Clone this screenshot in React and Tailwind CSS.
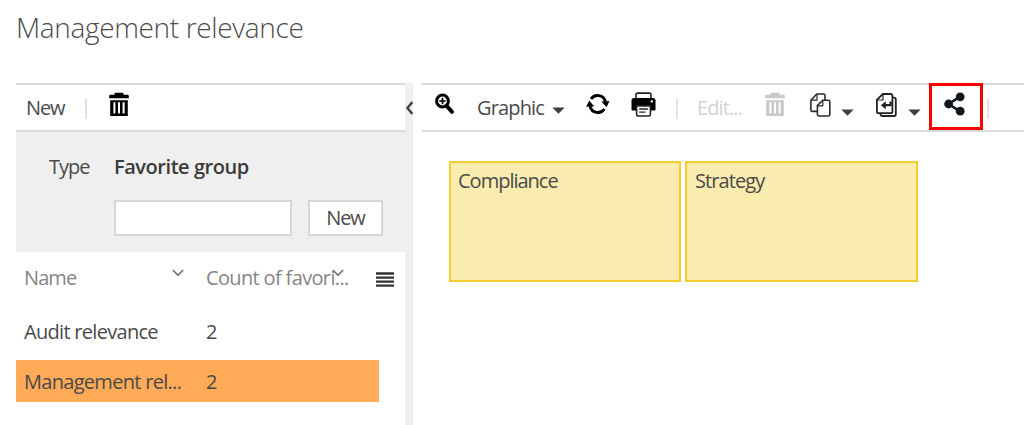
import React from "react";

function Trash({ className }) {
  return (
    <svg viewBox="0 0 20 25" className={className} fill="currentColor">
      <path d="M5.5 1.6Q5.5 0.8 6.5 0.8H13.5Q14.5 0.8 14.5 1.6V2.8H18.6Q19.8 2.8 19.8 4V6.2H0.2V4Q0.2 2.8 1.4 2.8H5.5Z" />
      <path fillRule="evenodd" d="M1.2 8.2H18.8V24H1.2ZM4.4 10.2V21.4H6.4V10.2ZM9 10.2V21.4H11V10.2ZM13.6 10.2V21.4H15.6V10.2Z" />
    </svg>
  );
}

function Caret({ className }) {
  return (
    <svg viewBox="0 0 13 7" className={className} fill="#3f3f3f">
      <path d="M0.3 0.5H12.7L6.5 6.8Z" />
    </svg>
  );
}

function ZoomIn({ className }) {
  return (
    <svg viewBox="0 0 20 22" className={className} fill="none" stroke="#000">
      <circle cx="7.5" cy="8" r="5.9" strokeWidth="3" />
      <path d="M7.5 4.8V11.2M4.3 8H10.7" strokeWidth="1.7" />
      <path d="M11.8 13L17 18.8" strokeWidth="4" strokeLinecap="round" />
    </svg>
  );
}

function Refresh({ className }) {
  return (
    <svg viewBox="0 0 24 22" className={className} fill="none" stroke="#000" strokeWidth="2.9">
      <path d="M5 6A8 8 0 0 1 19.4 8.6" />
      <path d="M18.4 16A8 8 0 0 1 4 13.4" />
      <path d="M15.4 8.4L23.4 8L20.6 14.2Z" fill="#000" stroke="none" />
      <path d="M0.2 13.8L8.2 13.4L3.2 7.6Z" fill="#000" stroke="none" />
    </svg>
  );
}

function Printer({ className }) {
  return (
    <svg viewBox="0 0 25 25" className={className}>
      <path d="M5 7V2.6Q5 1.1 6.5 1.1H18.5Q20 1.1 20 2.6V7" fill="none" stroke="#222" strokeWidth="1.6" />
      <path d="M3 6H22Q24.5 6 24.5 8.5V17.5Q24.5 18.6 23.4 18.6H1.6Q0.5 18.6 0.5 17.5V8.5Q0.5 6 3 6Z" fill="#000" />
      <circle cx="20.8" cy="9.4" r="1.2" fill="#fff" />
      <path d="M5.6 13.9H19.4V22.5Q19.4 24 17.9 24H7.1Q5.6 24 5.6 22.5Z" fill="#fff" stroke="#222" strokeWidth="1.6" />
      <path d="M8.2 17H16.8M8.2 20.2H14.5" stroke="#222" strokeWidth="1.3" />
    </svg>
  );
}

function Copy({ className }) {
  return (
    <svg viewBox="0 0 21 24" className={className} fill="#fff" stroke="#2b2b2b" strokeWidth="1.6" strokeLinejoin="round">
      <path d="M6.8 1H13.4Q15 1 15 2.6V18.4H2.4Q0.9 18.4 0.9 16.9V7.2Z" />
      <path d="M7 1.2V7.2H1.2" fill="none" strokeWidth="1.2" />
      <path d="M12.8 7.2H18.2Q19.8 7.2 19.8 8.8V21.4Q19.8 23 18.2 23H9Q7.4 23 7.4 21.4V12.6Z" />
      <path d="M12.8 7.4V12.8H7.6" fill="none" strokeWidth="1.2" />
    </svg>
  );
}

function PasteBack({ className }) {
  return (
    <svg viewBox="0 0 21 24" className={className} fill="#fff" stroke="#222" strokeWidth="1.8" strokeLinejoin="round">
      <path d="M17 4.6H18Q19.8 4.6 19.8 6.4V21.2Q19.8 23 18 23H6.4Q4.6 23 4.4 20.6" />
      <path d="M6.8 1H14.6Q16.4 1 16.4 2.8V18.4Q16.4 20.2 14.6 20.2H2.7Q0.9 20.2 0.9 18.4V6.8Z" />
      <path d="M7 1.2V7H1.2" fill="none" strokeWidth="1.2" />
      <path d="M14.6 8.4V12.2H8" fill="none" strokeWidth="2.2" />
      <path d="M4.8 12.2L9.8 8.2V16.2Z" fill="#222" stroke="none" />
    </svg>
  );
}

function Share({ className }) {
  return (
    <svg viewBox="0 0 21 24" className={className} fill="#12171c" stroke="#12171c">
      <path d="M16 4.6L4.6 12L16 19.4" fill="none" strokeWidth="2.6" />
      <circle cx="16.2" cy="4.8" r="4.4" stroke="none" />
      <circle cx="4.6" cy="12" r="4.4" stroke="none" />
      <circle cx="16.2" cy="19.2" r="4.4" stroke="none" />
    </svg>
  );
}

function Chevron({ className }) {
  return (
    <svg viewBox="0 0 12 8" className={className} fill="none" stroke="#777" strokeWidth="1.7">
      <path d="M0.8 1L6 6.2L11.2 1" />
    </svg>
  );
}

const bar = "flex h-[49px] items-start border-y-2 border-[#dadada] whitespace-nowrap";
const divider = "mt-[14px] h-5 w-0.5 shrink-0 bg-[#e2e2e4]";

export default function App() {
  return (
    <div className="flex h-[425px] w-[1024px] flex-col overflow-hidden bg-white font-['Open_Sans','Noto_Sans',sans-serif] text-[20px] leading-6 text-[#4a4a4a]">
      <h1 className="h-[83px] shrink-0 pt-[9px] pl-4 text-[28px] leading-9 font-light tracking-[-0.35px] text-[#4c4c4c]">
        Management relevance
      </h1>
      <div className="flex min-h-0 flex-1 pl-4">
        <section className="flex w-[389px] shrink-0 flex-col">
          <div className={bar}>
            <span className="mt-[11px] ml-2.5 w-[59px] tracking-[-1.1px]">New</span>
            <i className={divider} />
            <Trash className="mt-[7px] ml-[22px] h-[25px] w-5 text-black" />
          </div>
          <div className="h-[120px] shrink-0 bg-[#efefef] pt-[23px] pl-[33px]">
            <div className="flex whitespace-nowrap">
              <span className="w-[65px] tracking-[-1px]">Type</span>
              <b className="font-semibold tracking-[-0.45px] text-[#3a3a3a]">Favorite group</b>
            </div>
            <div className="mt-[21px] ml-[65px] flex gap-4">
              <input aria-label="Name" className="h-9 w-[178px] border-2 border-[#d6d6d6] bg-white" />
              <button className="h-9 w-[75px] border-2 border-[#d6d6d6] bg-white tracking-[-1.1px]">New</button>
            </div>
          </div>
          <div className="flex h-[57px] shrink-0 pt-[14px] pl-2 whitespace-nowrap text-[#858585]">
            <span className="w-[148px] tracking-[-0.9px]">Name</span>
            <Chevron className="mt-[3px] h-2 w-3" />
            <span className="ml-[22px] w-[126px] tracking-[-0.65px]">Count of favori...</span>
            <Chevron className="mt-[3px] h-2 w-3" />
            <svg viewBox="0 0 18 16" className="mt-[5px] ml-8 h-4 w-[18px]" stroke="#333" strokeWidth="2.3">
              <path d="M0 2.5H18M0 6.6H18M0 10.7H18M0 14.6H18" />
            </svg>
          </div>
          <div className="flex h-[51px] shrink-0 pt-[11px] pl-2 whitespace-nowrap">
            <span className="w-[182px] tracking-[-0.7px]">Audit relevance</span>
            <span>2</span>
          </div>
          <div className="flex h-[42px] w-[363px] shrink-0 bg-[#ffab57] pt-[10px] pl-2 whitespace-nowrap">
            <span className="w-[182px] tracking-[-0.7px]">Management rel...</span>
            <span>2</span>
          </div>
        </section>

        <div className="flex w-2 shrink-0 justify-center bg-[#efefef]">
          <svg viewBox="0 0 8 14" className="mt-[18px] h-[14px] w-2 shrink-0" fill="none" stroke="#444" strokeWidth="2.4">
            <path d="M7.4 1L2.4 7L7.4 13" />
          </svg>
        </div>

        <main className="ml-[9px] w-[602px] shrink-0">
          <div className={bar}>
            <ZoomIn className="mt-2 ml-[13px] h-[22px] w-5 shrink-0" />
            <span className="mt-[11px] ml-[22px] w-[75px] shrink-0 tracking-[-0.85px]">Graphic</span>
            <Caret className="mt-[22px] h-[7px] w-[13px] shrink-0" />
            <Refresh className="mt-2 ml-[21px] h-[22px] w-6 shrink-0" />
            <Printer className="mt-[7px] ml-[21px] h-[25px] w-[25px] shrink-0" />
            <span className="w-5 shrink-0" />
            <i className={divider} />
            <span className="mt-[11px] ml-[19px] w-[68px] shrink-0 tracking-[-0.9px] text-[#d2d2d2]">Edit...</span>
            <Trash className="mt-[7px] h-[25px] w-5 shrink-0 text-[#c9c9c9]" />
            <Copy className="mt-2 ml-[25px] h-6 w-[21px] shrink-0" />
            <Caret className="mt-6 ml-[10px] h-[7px] w-[13px] shrink-0" />
            <PasteBack className="mt-2 ml-[22px] h-6 w-[21px] shrink-0" />
            <Caret className="mt-6 ml-[11px] h-[7px] w-[13px] shrink-0" />
            <div className="-mt-[2px] ml-2 flex h-[47px] w-[54px] shrink-0 border-[3px] border-[#fb0000] pt-[6px] pl-3">
              <Share className="h-6 w-[21px]" />
            </div>
            <span className="w-1 shrink-0" />
            <i className={divider} />
          </div>
          <div className="mt-[29px] ml-[27px] flex gap-1">
            <div className="h-[121px] w-[232px] border-2 border-[#f3cd2f] bg-[#faebaf] pt-[6px] pl-[7px] tracking-[-1px]">Compliance</div>
            <div className="h-[121px] w-[233px] border-2 border-[#f3cd2f] bg-[#faebaf] pt-[6px] pl-[8px] tracking-[-0.9px]">Strategy</div>
          </div>
        </main>
      </div>
    </div>
  );
}
